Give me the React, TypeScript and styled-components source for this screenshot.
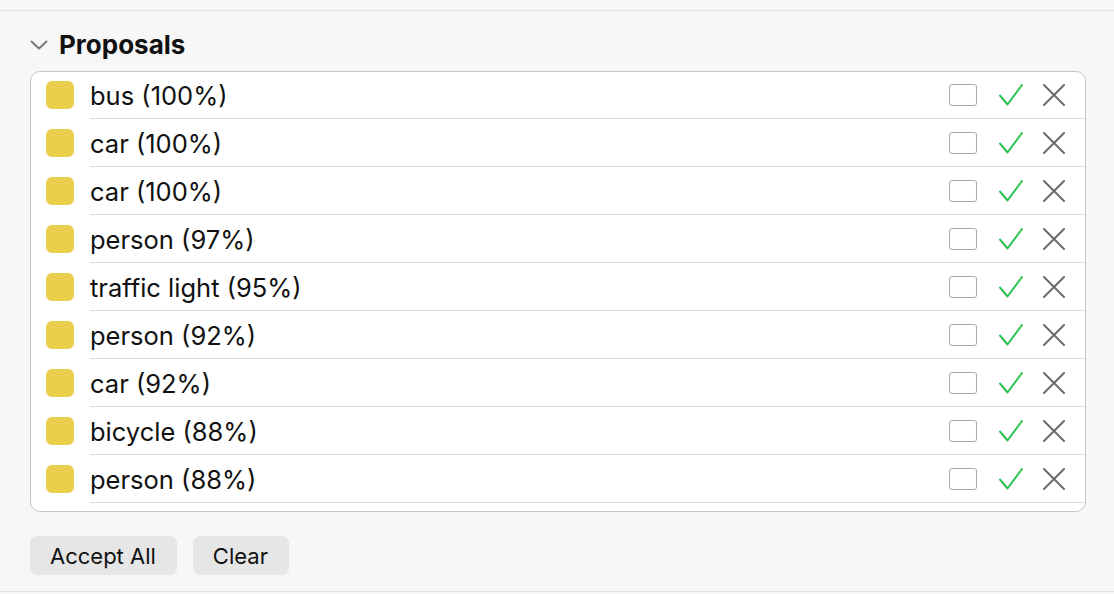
import React from 'react';
import styled, { createGlobalStyle } from 'styled-components';

const GlobalStyle = createGlobalStyle`
  html, body {
    margin: 0;
    padding: 0;
    background: #f7f7f7;
  }
  body {
    font-family: Inter, "Liberation Sans", sans-serif;
    -webkit-font-smoothing: antialiased;
  }
`;

const Page = styled.div`
  width: 1114px;
  height: 594px;
  background: #f7f7f7;
  overflow: hidden;
`;

const Rule = styled.div`
  height: 10px;
  border-bottom: 1px solid #e2e2e2;
`;

const Section = styled.section`
  padding: 0 28px 0 30px;
`;

const Header = styled.div`
  display: flex;
  align-items: center;
  gap: 11px;
  padding: 22px 0 14px;
  height: 24px;
`;

const Title = styled.h2`
  margin: 0;
  font-size: 26px;
  font-weight: 700;
  color: #111;
  line-height: 24px;
`;

const ListBox = styled.div`
  border: 1px solid #c6c6c6;
  border-radius: 10px;
  background: #fff;
  overflow: hidden;
  padding-bottom: 8px;
`;

const Rows = styled.ul`
  list-style: none;
  margin: -1px 0 0;
  padding: 0;
`;

const Row = styled.li`
  display: flex;
  align-items: stretch;
  height: 48px;
  padding-left: 15px;
`;

const Swatch = styled.span<{ $color: string }>`
  flex: none;
  align-self: center;
  width: 28px;
  height: 28px;
  border-radius: 6px;
  background: ${p => p.$color};
  margin-right: 16px;
`;

const RowBody = styled.div`
  flex: 1;
  display: flex;
  align-items: center;
  border-bottom: 1px solid #dedede;
  padding-right: 20px;
`;

const Label = styled.span`
  flex: 1;
  font-size: 25.5px;
  color: #111;
  padding-top: 2px;
`;

const Actions = styled.div`
  display: flex;
  align-items: center;
  padding-top: 1px;
`;

const CheckBox = styled.span`
  width: 26px;
  height: 20px;
  border: 1.5px solid #a8a8a8;
  border-radius: 3px;
  margin-right: 22px;
`;

const IconButton = styled.button<{ $gap?: number }>`
  border: none;
  background: none;
  padding: 0;
  display: flex;
  cursor: pointer;
  margin-right: ${p => p.$gap ?? 0}px;
`;

const ButtonBar = styled.div`
  display: flex;
  gap: 16px;
  margin-top: 24px;
`;

const PlainButton = styled.button`
  height: 39px;
  padding: 0 21px 0 20px;
  border: none;
  border-radius: 7px;
  background: #e6e6e6;
  font-family: Inter, "Liberation Sans", sans-serif;
  font-size: 22px;
  color: #111;
`;

const BottomRule = styled.div`
  margin-top: 16px;
  border-top: 1px solid #e2e2e2;
`;

const proposals = [
  { label: 'bus', score: 100 },
  { label: 'car', score: 100 },
  { label: 'car', score: 100 },
  { label: 'person', score: 97 },
  { label: 'traffic light', score: 95 },
  { label: 'person', score: 92 },
  { label: 'car', score: 92 },
  { label: 'bicycle', score: 88 },
  { label: 'person', score: 88 },
];

const Chevron = () => (
  <svg width="18" height="10" viewBox="0 0 18 10">
    <path d="M1.5 1.5 L9 8.5 L16.5 1.5" fill="none" stroke="#777" strokeWidth="2" strokeLinecap="round" strokeLinejoin="round" />
  </svg>
);

const Check = () => (
  <svg width="24" height="22" viewBox="0 0 24 22">
    <path d="M1 11.5 L8.5 20.5 L23 1" fill="none" stroke="#2fbf4f" strokeWidth="2" strokeLinecap="round" strokeLinejoin="round" />
  </svg>
);

const Cross = () => (
  <svg width="22" height="22" viewBox="0 0 22 22">
    <path d="M1 1 L21 21 M21 1 L1 21" fill="none" stroke="#6a6a6a" strokeWidth="2" strokeLinecap="round" />
  </svg>
);

export default function App() {
  return (
    <Page>
      <GlobalStyle />
      <Rule />
      <Section>
        <Header>
          <Chevron />
          <Title>Proposals</Title>
        </Header>
        <ListBox>
          <Rows>
            {proposals.map((p, i) => (
              <Row key={i}>
                <Swatch $color="#e9cf4c" />
                <RowBody>
                  <Label>{p.label} ({p.score}%)</Label>
                  <Actions>
                    <CheckBox />
                    <IconButton $gap={20}>
                      <Check />
                    </IconButton>
                    <IconButton>
                      <Cross />
                    </IconButton>
                  </Actions>
                </RowBody>
              </Row>
            ))}
          </Rows>
        </ListBox>
        <ButtonBar>
          <PlainButton>Accept All</PlainButton>
          <PlainButton>Clear</PlainButton>
        </ButtonBar>
      </Section>
      <BottomRule />
    </Page>
  );
}
